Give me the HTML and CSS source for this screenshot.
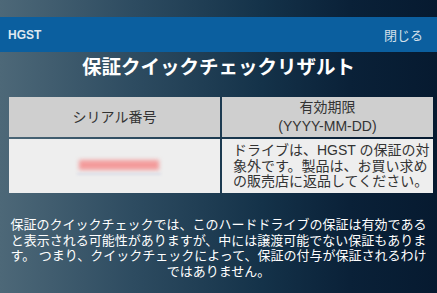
FILE: index.html
```html
<!DOCTYPE html>
<html lang="ja">
<head>
<meta charset="utf-8">
<link rel="stylesheet" href="styles.css">
</head>
<body>
<div class="page">
  <div class="topstrip"></div>
  <div class="bar">
    <span class="brand">HGST</span>
    <span class="close">閉じる</span>
  </div>
  <h1 class="title">保証クイックチェックリザルト</h1>
  <div class="table">
    <div class="cell head">シリアル番号</div>
    <div class="cell head">有効期限<br>(YYYY-MM-DD)</div>
    <div class="cell body serial"><div class="redact"></div><div class="redact-line"></div></div>
    <div class="cell body msg">ドライブは、HGST の保証の対<br>象外です。製品は、お買い求め<br>の販売店に返品してください。</div>
  </div>
  <p class="note">保証のクイックチェックでは、このハードドライブの保証は有効である<br>と表示される可能性がありますが、中には譲渡可能でない保証もありま<br>す。 つまり、クイックチェックによって、保証の付与が保証されるわけ<br>ではありません。</p>
</div>
</body>
</html>
```
FILE: styles.css
```css
html, body {
  margin: 0;
  padding: 0;
}
body {
  width: 437px;
  height: 293px;
  overflow: hidden;
  background: linear-gradient(to right, #4d6878 0%, #2e4c61 30%, #143249 60%, #0a2138 80%, #061a30 100%);
  font-family: "Liberation Sans", "Noto Sans CJK JP", sans-serif;
}
.page {
  display: flex;
  flex-direction: column;
}
.topstrip {
  height: 17px;
}
.bar {
  height: 35px;
  background: #0b5f9f;
  display: flex;
  align-items: center;
  justify-content: space-between;
  padding: 0 14px 0 8px;
}
.brand {
  font-weight: bold;
  font-size: 12px;
  color: #dfe8f0;
}
.close {
  font-size: 13px;
  color: #d4e0ea;
}
.title {
  margin: 1px 0 0 0;
  text-align: center;
  font-size: 19.5px;
  line-height: 28px;
  font-weight: bold;
  color: #ffffff;
}
.table {
  margin: 16px 4px 0 9px;
  display: grid;
  grid-template-columns: 1fr 1fr;
  grid-template-rows: 40px 54px;
  gap: 2px;
}
.cell {
  color: #333333;
  font-size: 14px;
}
.head {
  background: #cfcfcf;
  display: flex;
  align-items: center;
  justify-content: center;
  text-align: center;
  line-height: 19px;
}
.body {
  background: #eeeeee;
}
.serial {
  position: relative;
}
.redact {
  position: absolute;
  left: 70px;
  top: 21px;
  width: 80px;
  height: 10px;
  background: #f39b9b;
  filter: blur(2px);
}
.redact-line {
  position: absolute;
  left: 68px;
  top: 34px;
  width: 84px;
  height: 2px;
  background: #dcdde8;
  filter: blur(1px);
}
.msg {
  padding: 4px 2px 0 11px;
  line-height: 15.5px;
  white-space: nowrap;
}
.note {
  margin: 24px 0 0 0;
  text-align: center;
  font-size: 13px;
  line-height: 15.5px;
  color: #ffffff;
  white-space: nowrap;
}
```
